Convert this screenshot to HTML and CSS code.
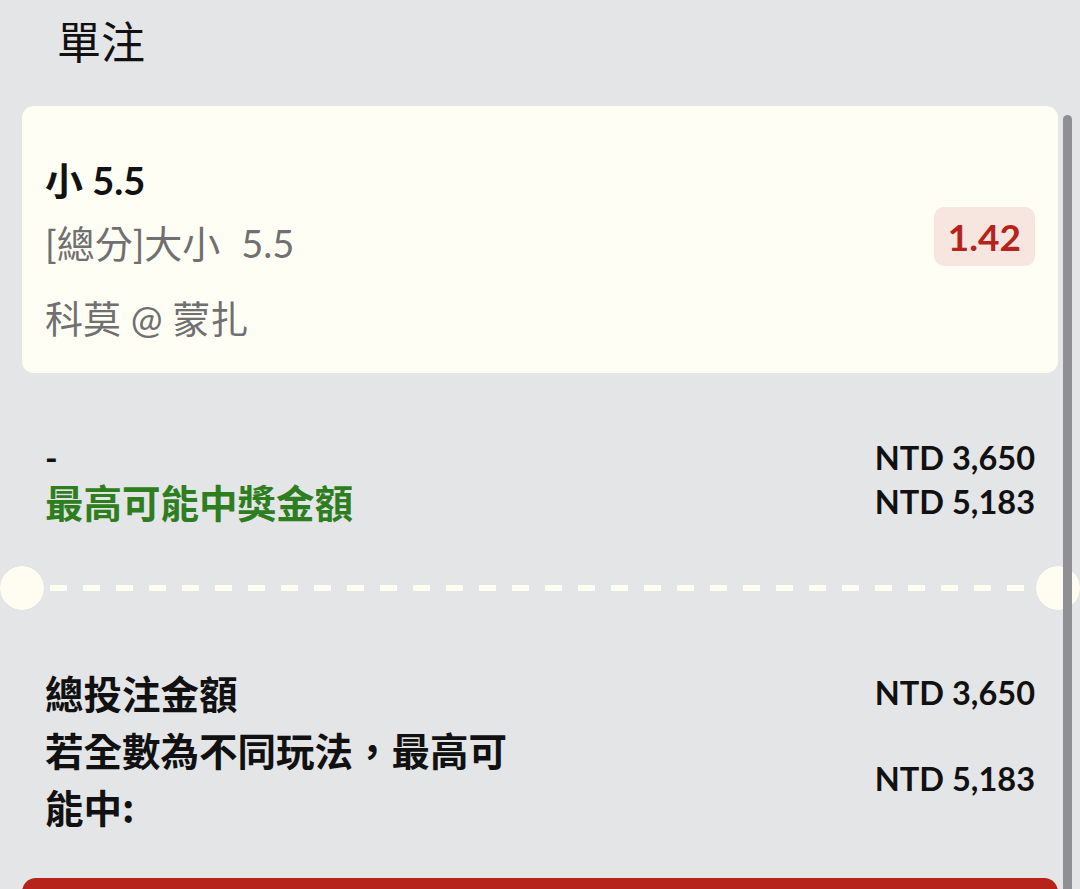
FILE: index.html
```html
<!DOCTYPE html>
<html lang="zh-Hant">
<head>
  <meta charset="UTF-8" />
  <meta name="viewport" content="width=device-width, initial-scale=1.0" />
  <title>單注</title>
  <link rel="stylesheet" href="styles.css">
</head>
<body>

  <div class="betslip">
    <h1 class="slip-title">單注</h1>

    <!-- selection card -->
    <section class="bet-card">
      <div class="bet-info">
        <div class="bet-pick">小 5.5</div>
        <div class="bet-market">[總分]大小<span class="hdp">5.5</span></div>
        <div class="bet-match">科莫 @ 蒙扎</div>
      </div>
      <div class="odds-badge">1.42</div>
    </section>

    <!-- stake / return -->
    <section class="summary">
      <div class="summary-row">
        <span class="stake-input">-</span>
        <span class="amount">NTD 3,650</span>
      </div>
      <div class="summary-row">
        <span class="label win">最高可能中獎金額</span>
        <span class="amount">NTD 5,183</span>
      </div>
    </section>

    <div class="ticket-cut"></div>

    <!-- totals -->
    <section class="totals">
      <div class="totals-row">
        <span class="label">總投注金額</span>
        <span class="amount">NTD 3,650</span>
      </div>
      <div class="totals-row">
        <span class="label wrap">若全數為不同玩法，最高可能中:</span>
        <span class="amount">NTD 5,183</span>
      </div>
    </section>

    <button class="place-bet" type="button"></button>
  </div>

  <div class="scroll-thumb"></div>

</body>
</html>
```

FILE: styles.css
```css
body {
  margin: 0;
  background: #e4e5e7;
  color: #111;
  font-family: 'Lato', 'Noto Sans CJK TC', sans-serif;
  overflow: hidden;
  height: 889px;
}

.label,
.slip-title {
  font-family: 'Noto Sans CJK TC', sans-serif;
}

.betslip {
  padding: 0 22px;
}

.slip-title {
  margin: 0 0 0 35px;
  padding-top: 14px;
  font-size: 44px;
  line-height: 53px;
  font-weight: 400;
  height: 92px;
}

/* selection card */
.bet-card {
  display: flex;
  align-items: center;
  justify-content: space-between;
  background: #fffef4;
  border-radius: 12px;
  padding: 49px 23px 30px;
}

.bet-pick,
.bet-market,
.bet-match {
  font-size: 38px;
  height: 50px;
  line-height: 50px;
  overflow: hidden;
}

.bet-pick {
  font-weight: 700;
}

.bet-market,
.bet-match {
  color: #707070;
}

.bet-market {
  margin-top: 13px;
}

.bet-market .hdp {
  margin-left: 21px;
}

.bet-match {
  margin-top: 25px;
}

.odds-badge {
  background: #f7e5df;
  color: #b5231b;
  font-size: 37px;
  font-weight: 700;
  height: 59px;
  line-height: 59px;
  padding: 0 14px;
  border-radius: 10px;
  margin-bottom: 26px;
}

/* stake / return */
.summary {
  padding: 62px 23px 0;
}

.summary-row,
.totals-row {
  display: flex;
  justify-content: space-between;
  align-items: center;
}

.summary-row {
  height: 44px;
}

.stake-input {
  font-size: 34px;
  font-weight: 700;
}

.amount {
  font-size: 32.5px;
  font-weight: 700;
  white-space: nowrap;
}

.label {
  font-size: 38.5px;
  font-weight: 700;
  line-height: 57px;
}

.label.win {
  color: #2e7d1f;
  line-height: 44px;
}

.label.wrap {
  max-width: 48%;
}

/* dashed ticket cut */
.ticket-cut {
  position: relative;
  height: 44px;
  margin: 43px -22px 0;
}

.ticket-cut::after {
  content: "";
  position: absolute;
  left: 50px;
  right: 40px;
  top: 19px;
  height: 6px;
  background: repeating-linear-gradient(90deg, #fffdf2 0 17px, transparent 17px 33px);
}

.ticket-cut::before {
  content: "";
  position: absolute;
  inset: 0;
  background:
    radial-gradient(circle at 22px 22px, #fffdf2 21.5px, transparent 22px),
    radial-gradient(circle at 1058px 22px, #fffdf2 21.5px, transparent 22px);
}

/* totals */
.totals {
  padding: 54px 23px 0;
}

.place-bet {
  display: block;
  width: 100%;
  height: 80px;
  margin-top: 43px;
  border: 0;
  border-radius: 14px;
  background: #b5231b;
}

.scroll-thumb {
  position: absolute;
  top: 115px;
  left: 1063px;
  width: 9px;
  height: 800px;
  background: #909094;
  border-radius: 5px 5px 0 0;
}
```
